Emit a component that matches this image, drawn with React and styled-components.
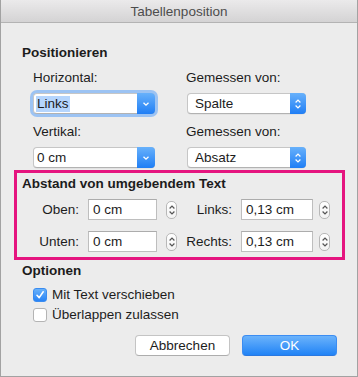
import React from 'react';
import styled, { createGlobalStyle } from 'styled-components';

const Global = createGlobalStyle`
  html, body { margin: 0; padding: 0; background: #ececec; }
  body { font-family: "Liberation Sans", Arial, sans-serif; font-size: 13.5px; color: #1c1c1c; }
  * { box-sizing: border-box; }
`;

const Window = styled.div`
  width: 358px;
  height: 377px;
  background: #ececec;
  border: 1px solid #a2a2a2;
  border-top: none;
  display: flex;
  flex-direction: column;
`;

const TitleBar = styled.div`
  height: 23px;
  flex: none;
  background: linear-gradient(#ebeaeb, #d4d3d4);
  border-bottom: 1px solid #b3b3b3;
  text-align: center;
  line-height: 22px;
  padding-top: 1px;
  color: #4d4d4d;
`;

const Body = styled.div`
  padding: 22px 12px 0 13px;
  display: flex;
  flex-direction: column;
`;

const SectionTitle = styled.div`
  font-weight: bold;
  line-height: 16px;
  padding-left: ${p => p.$inset}px;
  margin-top: ${p => p.$top || 0}px;
`;

const FieldsGrid = styled.div`
  display: grid;
  grid-template-columns: 153px 1fr;
  row-gap: 10px;
  margin: 9px 0 0 19px;
`;

const Field = styled.div`
  display: flex;
  flex-direction: column;
  gap: 7px;
  align-items: flex-start;
`;

const Label = styled.div`
  line-height: 16px;
`;

const Popup = styled.div`
  width: ${p => p.$width}px;
  height: 21px;
  margin-left: ${p => p.$shift || 0}px;
  display: flex;
  background: #fff;
  border: 1px solid #c6c6c6;
  border-bottom-color: #b2b2b2;
  border-radius: 4px;
  box-shadow: ${p => (p.$focus ? '0 0 0 3px #9cc3f3' : '0 0.5px 0.5px rgba(0,0,0,0.08)')};
`;

const PopupText = styled.div`
  flex: 1;
  display: flex;
  align-items: center;
  padding-left: ${p => p.$pad}px;
  line-height: 16px;
`;

const Selected = styled.span`
  background: #b5d5fd;
  padding: 0 1px;
`;

const ArrowBox = styled.div`
  width: ${p => p.$width}px;
  margin: -1px -1px -1px 0;
  background: linear-gradient(#68b1fb, #1f7ef5);
  border-radius: 0 4px 4px 0;
  display: flex;
  align-items: center;
  justify-content: center;
`;

const SpacingBox = styled.div`
  margin-top: 2px;
  border: 3px solid #e5157f;
  padding: 3px 0 5px 0;
`;

const SpacingGrid = styled.div`
  display: grid;
  grid-template-columns: 62px 69px 11px 46px 72px 11px;
  column-gap: 9px;
  row-gap: 11px;
  align-items: center;
  margin-top: 7px;
`;

const RowLabel = styled.div`
  text-align: right;
  line-height: 16px;
  white-space: nowrap;
`;

const TextInput = styled.div`
  height: 21px;
  background: #fff;
  border: 1px solid #bebebe;
  border-top-color: #acacac;
  padding-left: 4px;
  display: flex;
  align-items: center;
`;

const Stepper = styled.div`
  width: 11px;
  height: 18px;
  margin-left: ${p => p.$shift || 0}px;
  border: 1px solid #b8b8b8;
  border-radius: 5px;
  background: linear-gradient(#ffffff, #f3f3f3);
  display: flex;
  align-items: center;
  justify-content: center;
`;

const CheckList = styled.div`
  margin: 6px 0 0 19px;
  display: flex;
  flex-direction: column;
`;

const CheckRow = styled.label`
  height: 20px;
  display: flex;
  align-items: center;
  gap: 5px;
  line-height: 16px;
`;

const Box = styled.span`
  width: 14px;
  height: 14px;
  border-radius: 3px;
  display: flex;
  align-items: center;
  justify-content: center;
  background: ${p => (p.$checked ? 'linear-gradient(#6ab2fa, #2783f6)' : '#fff')};
  border: 1px solid ${p => (p.$checked ? '#3a8cf0' : '#b4b4b4')};
`;

const ButtonRow = styled.div`
  margin-top: 10px;
  padding-right: 8px;
  display: flex;
  justify-content: flex-end;
  gap: 12px;
`;

const Button = styled.button`
  width: 95px;
  height: 21px;
  padding: 0;
  font: inherit;
  border-radius: 4px;
  color: ${p => (p.$primary ? '#fff' : '#1c1c1c')};
  background: ${p => (p.$primary ? 'linear-gradient(#6bb3fb, #2183f6)' : '#fff')};
  border: 1px solid ${p => (p.$primary ? '#3c8df2' : '#c4c4c4')};
  border-bottom-color: ${p => (p.$primary ? '#2a78e0' : '#adadad')};
`;

const Down = () => (
  <svg width="8" height="6" viewBox="0 0 8 6">
    <path d="M1.5 1.8 L4 4.2 L6.5 1.8" stroke="#fff" strokeWidth="1.3" fill="none" />
  </svg>
);

const UpDown = ({ color = '#fff' }) => (
  <svg width="8" height="12" viewBox="0 0 8 12">
    <path d="M1.6 4.5 L4 2 L6.4 4.5" stroke={color} strokeWidth="1.2" fill="none" />
    <path d="M1.6 7.5 L4 10 L6.4 7.5" stroke={color} strokeWidth="1.2" fill="none" />
  </svg>
);

const Check = () => (
  <svg width="10" height="10" viewBox="0 0 10 10">
    <path d="M2 5.3 L4.2 7.6 L8.2 1.8" stroke="#fff" strokeWidth="1.6" fill="none" strokeLinecap="round" strokeLinejoin="round" />
  </svg>
);

const SmallStepper = ({ shift }) => (
  <Stepper $shift={shift}>
    <UpDown color="#555" />
  </Stepper>
);

export default function App() {
  return (
    <>
      <Global />
      <Window>
        <TitleBar>Tabellenposition</TitleBar>
        <Body>
          <SectionTitle $inset={8}>Positionieren</SectionTitle>
          <FieldsGrid>
            <Field>
              <Label>Horizontal:</Label>
              <Popup $width={122} $focus>
                <PopupText $pad={2}><Selected>Links</Selected></PopupText>
                <ArrowBox $width={18}><Down /></ArrowBox>
              </Popup>
            </Field>
            <Field>
              <Label>Gemessen von:</Label>
              <Popup $width={119} $shift={1}>
                <PopupText $pad={7}>Spalte</PopupText>
                <ArrowBox $width={16}><UpDown /></ArrowBox>
              </Popup>
            </Field>
            <Field>
              <Label>Vertikal:</Label>
              <Popup $width={122}>
                <PopupText $pad={3}>0 cm</PopupText>
                <ArrowBox $width={18}><Down /></ArrowBox>
              </Popup>
            </Field>
            <Field>
              <Label>Gemessen von:</Label>
              <Popup $width={119} $shift={1}>
                <PopupText $pad={7}>Absatz</PopupText>
                <ArrowBox $width={16}><UpDown /></ArrowBox>
              </Popup>
            </Field>
          </FieldsGrid>

          <SpacingBox>
            <SectionTitle $inset={5}>Abstand von umgebendem Text</SectionTitle>
            <SpacingGrid>
              <RowLabel>Oben:</RowLabel>
              <TextInput>0 cm</TextInput>
              <SmallStepper />
              <RowLabel>Links:</RowLabel>
              <TextInput>0,13 cm</TextInput>
              <SmallStepper shift={-3} />
              <RowLabel>Unten:</RowLabel>
              <TextInput>0 cm</TextInput>
              <SmallStepper />
              <RowLabel>Rechts:</RowLabel>
              <TextInput>0,13 cm</TextInput>
              <SmallStepper shift={-3} />
            </SpacingGrid>
          </SpacingBox>

          <SectionTitle $inset={8} $top={3}>Optionen</SectionTitle>
          <CheckList>
            <CheckRow>
              <Box $checked><Check /></Box>
              Mit Text verschieben
            </CheckRow>
            <CheckRow>
              <Box />
              Überlappen zulassen
            </CheckRow>
          </CheckList>

          <ButtonRow>
            <Button>Abbrechen</Button>
            <Button $primary>OK</Button>
          </ButtonRow>
        </Body>
      </Window>
    </>
  );
}
